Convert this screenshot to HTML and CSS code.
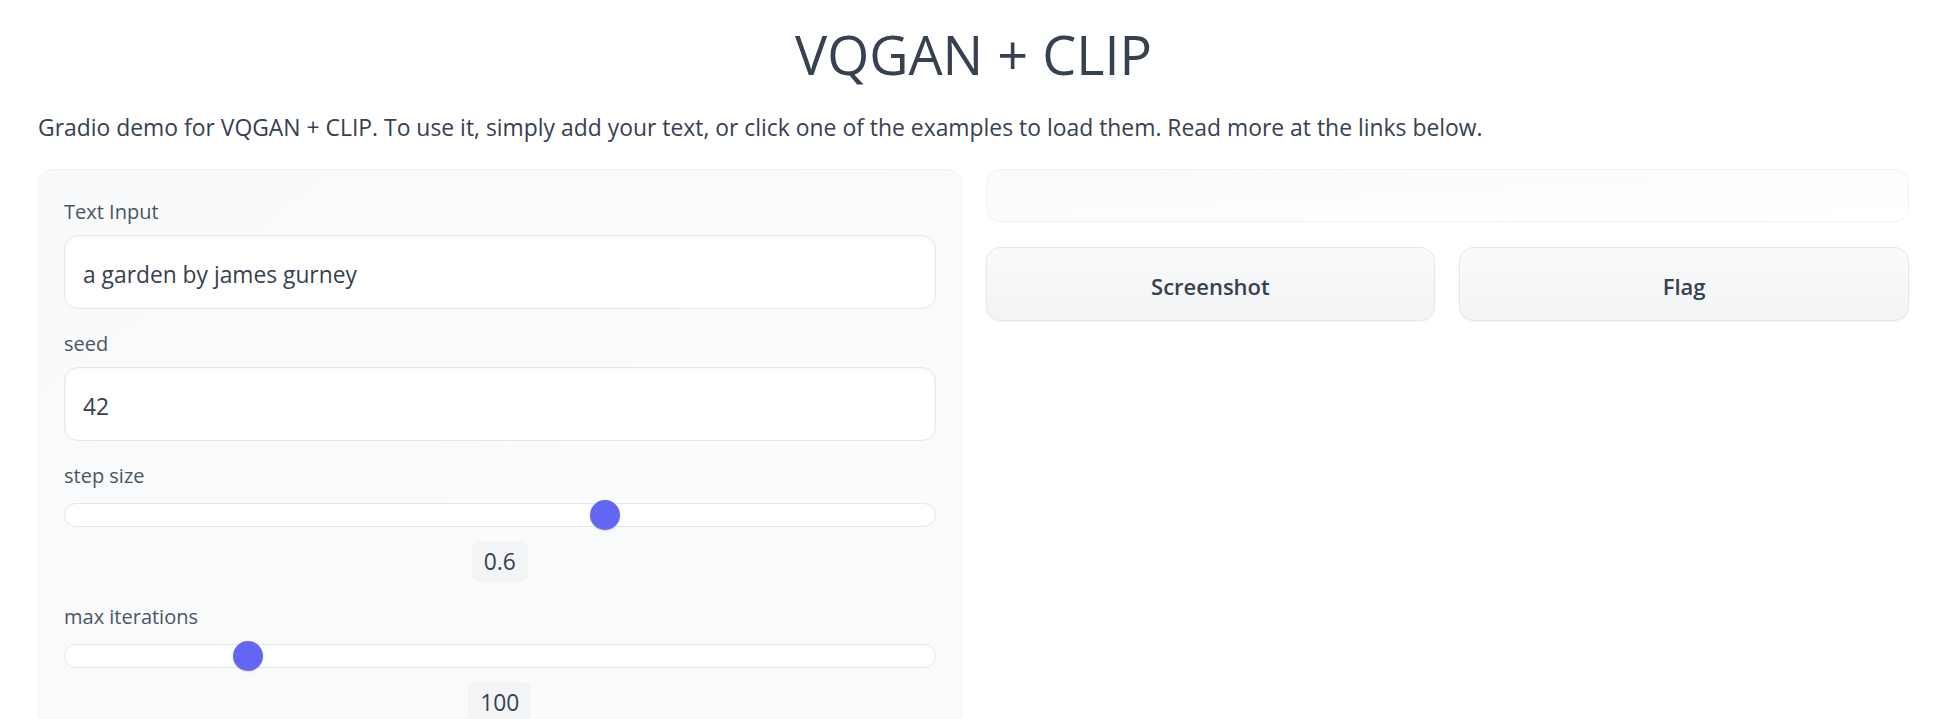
FILE: index.html
```html
<!DOCTYPE html>
<html>
<head>
<meta charset="utf-8">
<link rel="stylesheet" href="styles.css">
</head>
<body>
<div class="page">
  <h1 class="title">VQGAN + CLIP</h1>
  <p class="desc">Gradio demo for VQGAN + CLIP. To use it, simply add your text, or click one of the examples to load them. Read more at the links below.</p>
  <div class="columns">
    <div class="panel">
      <div class="field">
        <div class="label">Text Input</div>
        <div class="input">a garden by james gurney</div>
      </div>
      <div class="field">
        <div class="label">seed</div>
        <div class="input">42</div>
      </div>
      <div class="field">
        <div class="label">step size</div>
        <div class="track"><div class="thumb" style="--p:0.625"></div></div>
        <div class="value-row"><span class="value">0.6</span></div>
      </div>
      <div class="field">
        <div class="label">max iterations</div>
        <div class="track"><div class="thumb" style="--p:0.2"></div></div>
        <div class="value-row"><span class="value">100</span></div>
      </div>
    </div>
    <div class="out-col">
      <div class="output"></div>
      <div class="btn-row">
        <button class="btn">Screenshot</button>
        <button class="btn">Flag</button>
      </div>
    </div>
  </div>
</div>
</body>
</html>
```
FILE: styles.css
```css
html, body {
  margin: 0;
  padding: 0;
  background: #ffffff;
}
body {
  font-family: "Open Sans", "Noto Sans", sans-serif;
  color: #374151;
}
.page {
  padding: 23px 37px 0 38px;
}
.title {
  margin: 0;
  text-align: center;
  font-size: 54px;
  line-height: 62px;
  font-weight: 400;
  color: #374151;
}
.desc {
  margin: 27px 0 0 0;
  font-size: 22.9px;
  line-height: 32px;
  color: #374151;
}
.columns {
  display: grid;
  grid-template-columns: 1fr 1fr;
  gap: 24px;
  margin-top: 25px;
  align-items: start;
}
.panel {
  background: linear-gradient(to bottom right, #f9fafb, #fafbfc);
  border: 1px solid #f1f2f4;
  border-radius: 14px;
  padding: 28px 25px 40px 25px;
  display: flex;
  flex-direction: column;
  gap: 21px;
  height: 700px;
  box-sizing: border-box;
}
.field {
  display: flex;
  flex-direction: column;
}
.label {
  font-size: 20px;
  line-height: 28px;
  color: #4b5563;
  margin-bottom: 9px;
}
.input {
  background: #ffffff;
  border: 1px solid #e5e7eb;
  border-radius: 14px;
  padding: 23px 18px 17px 18px;
  font-size: 22.8px;
  line-height: 32px;
  color: #374151;
  box-shadow: inset 0 2px 4px rgba(0,0,0,0.03);
}
.track {
  position: relative;
  height: 22px;
  margin-top: 4px;
  background: #ffffff;
  border: 1px solid #e5e7eb;
  border-radius: 12px;
}
.thumb {
  position: absolute;
  top: -4px;
  left: calc(var(--p) * (100% - 30px));
  width: 30px;
  height: 30px;
  border-radius: 50%;
  background: #6366f1;
  box-shadow: 0 1px 2px rgba(0,0,0,0.15);
}
.value-row {
  display: flex;
  justify-content: center;
  margin-top: 14px;
}
.value {
  background: #f3f4f6;
  border-radius: 8px;
  padding: 5px 12px 4px 12px;
  font-size: 22.8px;
  line-height: 32px;
  color: #374151;
}
.out-col {
  display: flex;
  flex-direction: column;
  gap: 25px;
}
.output {
  height: 53px;
  box-sizing: border-box;
  background: linear-gradient(to bottom right, #f9fafb, #ffffff);
  border: 1px solid #f1f2f4;
  border-radius: 14px;
}
.btn-row {
  display: grid;
  grid-template-columns: 1fr 1fr;
  gap: 24px;
}
.btn {
  height: 74px;
  padding-top: 5px;
  font-family: "Open Sans", "Noto Sans", sans-serif;
  font-size: 22px;
  font-weight: 600;
  color: #374151;
  background: linear-gradient(to bottom, #f9fafb, #f3f4f6);
  border: 1px solid #e5e7eb;
  border-radius: 14px;
  box-shadow: 0 1px 2px rgba(0,0,0,0.04);
}
```
